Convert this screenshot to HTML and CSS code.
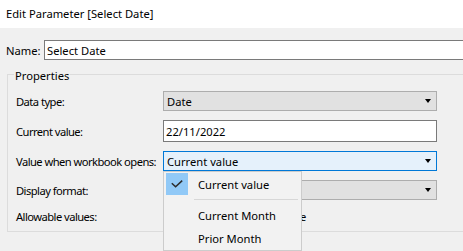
FILE: index.html
```html
<!DOCTYPE html>
<html>
<head>
<meta charset="utf-8">
<link rel="stylesheet" href="styles.css">
</head>
<body>
<div class="dialog">
  <div class="titlebar">Edit Parameter [Select Date]</div>
  <div class="content">
    <div class="name-row">
      <span class="name-label">Name:</span>
      <div class="textbox name-box">Select Date</div>
    </div>
    <fieldset class="group">
      <legend class="group-title">Properties</legend>
      <div class="form">
        <div class="row">
          <span class="label">Data type:</span>
          <div class="combo"><span>Date</span><span class="arrow"></span></div>
        </div>
        <div class="row">
          <span class="label">Current value:</span>
          <div class="textbox value-box">22/11/2022</div>
        </div>
        <div class="row">
          <span class="label">Value when workbook opens:</span>
          <div class="combo-wrap">
            <div class="combo focused"><span>Current value</span><span class="arrow"></span></div>
            <div class="popup">
              <div class="item"><span class="check-slot selected"><svg width="12" height="8" viewBox="0 0 12 8"><path d="M0.8 3.2 L4.6 6.8 L11.2 0.6" fill="none" stroke="#2b2b2b" stroke-width="1.5"/></svg></span><span class="item-text">Current value</span></div>
              <div class="separator"></div>
              <div class="item tall"><span class="check-slot"></span><span class="item-text">Current Month</span></div>
              <div class="item tall"><span class="check-slot"></span><span class="item-text">Prior Month</span></div>
            </div>
          </div>
        </div>
        <div class="row">
          <span class="label">Display format:</span>
          <div class="combo"><span></span><span class="arrow"></span></div>
        </div>
        <div class="row">
          <span class="label">Allowable values:</span>
          <div class="radios">
            <span class="radio"><span class="dot"></span>All</span>
            <span class="radio"><span class="dot"></span>List</span>
            <span class="radio"><span class="dot"></span>Range</span>
          </div>
        </div>
      </div>
    </fieldset>
  </div>
</div>
</body>
</html>
```
FILE: styles.css
```css
html, body {
  margin: 0;
  padding: 0;
  overflow: hidden;
  background: #f0f0f0;
}
body {
  font-family: "Noto Sans", "Open Sans", sans-serif;
  font-size: 11.2px;
  color: #000;
}
.dialog {
  width: 540px;
  height: 251px;
}
.titlebar {
  height: 28px;
  line-height: 27px;
  background: #fff;
  padding-left: 6px;
}
.content {
  background: #f0f0f0;
  padding: 12px 0 0 6px;
  height: 211px;
}
.name-row {
  display: flex;
  align-items: center;
  height: 20px;
}
.name-label {
  width: 38px;
}
.textbox {
  box-sizing: border-box;
  background: #fff;
  border: 1px solid #7a7a7a;
  padding-left: 2px;
  display: flex;
  align-items: center;
}
.name-box {
  flex: 1;
  height: 20px;
}
.group {
  margin: 6px 0 0 1px;
  border: 1px solid #dcdcdc;
  padding: 8px 0 7px 8px;
}
.group-title {
  margin-left: -2px;
  padding: 2px 1px 0;
  line-height: 15px;
}
.form {
  display: flex;
  flex-direction: column;
  gap: 9px;
}
.row {
  display: grid;
  grid-template-columns: 147px 274px;
  align-items: center;
}
.label {
  white-space: nowrap;
  letter-spacing: -0.55px;
}
.combo {
  box-sizing: border-box;
  height: 20px;
  border: 1px solid #adadad;
  background: #e1e1e1;
  padding: 0 5px 0 3px;
  display: flex;
  align-items: center;
  justify-content: space-between;
}
.combo.focused {
  background: #e5f1fb;
  border-color: #0078d7;
}
.arrow {
  width: 0;
  height: 0;
  border-left: 3.5px solid transparent;
  border-right: 3.5px solid transparent;
  border-top: 4px solid #000;
}
.value-box {
  height: 22px;
  padding-left: 2px;
}
.combo-wrap {
  position: relative;
}
.popup {
  position: absolute;
  top: 100%;
  left: 0;
  width: 139px;
  height: 80px;
  box-sizing: border-box;
  background: #f2f2f2;
  border: 1px solid #cccccc;
  padding: 1px 1px 0 2px;
  z-index: 2;
}
.item {
  display: flex;
  align-items: center;
  height: 22px;
}
.item.tall {
  height: 23px;
}
.check-slot {
  width: 22px;
  height: 22px;
  display: flex;
  align-items: center;
  justify-content: center;
  flex: none;
}
.check-slot.selected {
  background: #91c9f7;
}
.item-text {
  margin-left: 10px;
}
.separator {
  height: 1px;
  background: #d7d7d7;
  margin: 4px 2px 4px 28px;
}
.radios {
  display: flex;
  gap: 14px;
  align-items: center;
}
.radio {
  display: flex;
  align-items: center;
  gap: 4px;
}
.dot {
  width: 11px;
  height: 11px;
  border: 1px solid #333;
  border-radius: 50%;
  background: #fff;
}
```
